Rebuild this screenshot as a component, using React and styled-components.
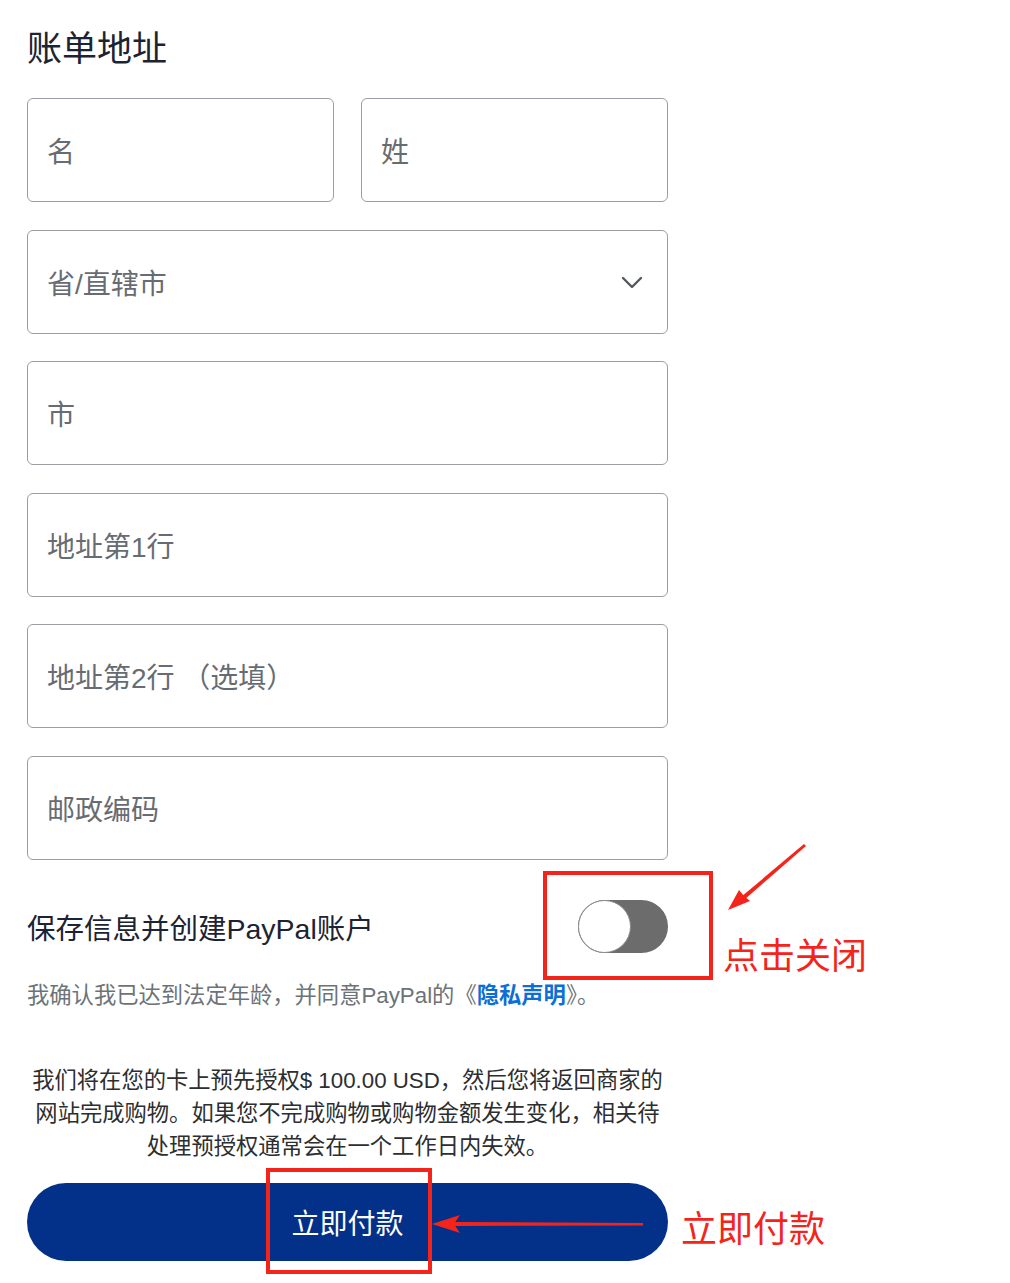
import React from "react";
import styled, { createGlobalStyle } from "styled-components";

const GlobalStyle = createGlobalStyle`
  html, body {
    margin: 0;
    padding: 0;
    background: #ffffff;
  }
  body {
    font-family: "Liberation Sans", "Noto Sans CJK SC", sans-serif;
    -webkit-font-smoothing: antialiased;
  }
`;

const fields = [
  { label: "省/直辖市", select: true },
  { label: "市" },
  { label: "地址第1行" },
  { label: "地址第2行 （选填）" },
  { label: "邮政编码" },
];

export default function App() {
  return (
    <>
      <GlobalStyle />
      <Page>
        <Form>
          <Title>账单地址</Title>

          <Fields>
            <NameRow>
              <Field>
                <Placeholder>名</Placeholder>
              </Field>
              <Field>
                <Placeholder>姓</Placeholder>
              </Field>
            </NameRow>

            {fields.map((f) => (
              <Field key={f.label}>
                <Placeholder>{f.label}</Placeholder>
                {f.select && (
                  <Chevron viewBox="0 0 22 14" width="22" height="14">
                    <polyline
                      points="2,2 11,11 20,2"
                      fill="none"
                      stroke="#55585c"
                      strokeWidth="2.4"
                      strokeLinecap="round"
                      strokeLinejoin="round"
                    />
                  </Chevron>
                )}
              </Field>
            ))}
          </Fields>

          <SaveRow>
            <SaveLabel>保存信息并创建PayPal账户</SaveLabel>
            <Toggle>
              <Knob />
            </Toggle>
          </SaveRow>

          <Consent>
            我确认我已达到法定年龄，并同意PayPal的《<ConsentLink>隐私声明</ConsentLink>》。
          </Consent>

          <Notice>
            <Line>我们将在您的卡上预先授权$ 100.00 USD，然后您将返回商家的</Line>
            <Line>网站完成购物。如果您不完成购物或购物金额发生变化，相关待</Line>
            <Line>处理预授权通常会在一个工作日内失效。</Line>
          </Notice>

          <PayButton type="button">立即付款</PayButton>
        </Form>

        {/* annotations */}
        <MarkBox $left={543} $top={871} $width={170} $height={109} />
        <ArrowSvg $left={720} $top={838} width="92" height="80" viewBox="0 0 92 80">
          <polygon points="84,6 86,8 24,62 21,59" fill="#f5241a" />
          <polygon points="8,72 30,63 24,58 19,52" fill="#f5241a" />
        </ArrowSvg>
        <NoteText $left={723} $top={933}>点击关闭</NoteText>

        <MarkBox $left={266} $top={1168} $width={166} $height={106} />
        <ArrowSvg $left={430} $top={1212} width="216" height="24" viewBox="0 0 216 24">
          <polygon points="24,10 213,11 213,13.5 24,14" fill="#f5241a" />
          <polygon points="2,12 30,3 24,12 30,21" fill="#f5241a" />
        </ArrowSvg>
        <NoteText $left={681} $top={1206}>立即付款</NoteText>
      </Page>
    </>
  );
}

// styled-components
const Page = styled.div`
  position: relative;
  width: 1010px;
  min-height: 1283px;
  padding: 28px 0 0 27px;
  box-sizing: border-box;
  overflow: hidden;
`;

const Form = styled.div`
  width: 641px;
  display: flex;
  flex-direction: column;
`;

const Title = styled.h1`
  margin: 0 0 28px;
  font-size: 35px;
  line-height: 42px;
  font-weight: 400;
  color: #1c2333;
`;

const Fields = styled.div`
  display: flex;
  flex-direction: column;
  gap: 27.5px;
`;

const NameRow = styled.div`
  display: grid;
  grid-template-columns: 1fr 1fr;
  gap: 27px;
`;

const Field = styled.div`
  height: 104px;
  box-sizing: border-box;
  border: 1px solid #9b9ea2;
  border-radius: 6px;
  padding: 0 24px 0 19px;
  display: flex;
  align-items: center;
  justify-content: space-between;
`;

const Placeholder = styled.span`
  font-size: 28px;
  color: #676c72;
  white-space: pre;
`;

const Chevron = styled.svg`
  display: block;
  flex-shrink: 0;
  margin-top: 3px;
`;

const SaveRow = styled.div`
  margin-top: 40px;
  height: 53px;
  display: flex;
  align-items: center;
  justify-content: space-between;
`;

const SaveLabel = styled.span`
  font-size: 28.5px;
  color: #1c2333;
`;

const Toggle = styled.div`
  position: relative;
  width: 90px;
  height: 53px;
  border-radius: 27px;
  background: #6c6c6c;
  display: flex;
  align-items: center;
`;

const Knob = styled.div`
  width: 53px;
  height: 53px;
  box-sizing: border-box;
  border-radius: 50%;
  background: #ffffff;
  border: 1px solid #8a8a8a;
`;

const Consent = styled.p`
  margin: 28px 0 0;
  font-size: 22.3px;
  line-height: 30px;
  color: #6c7378;
  white-space: nowrap;
`;

const ConsentLink = styled.a`
  color: #0b6fd6;
  font-weight: 700;
  text-decoration: none;
`;

const Notice = styled.div`
  margin-top: 53px;
  text-align: center;
  font-size: 22.3px;
  line-height: 33px;
  color: #2c2e2f;
`;

const Line = styled.span`
  display: block;
  white-space: nowrap;
`;

const PayButton = styled.button`
  margin-top: 20px;
  height: 78px;
  width: 100%;
  border: none;
  border-radius: 39px;
  background: #033189;
  color: #ffffff;
  font-family: inherit;
  font-size: 28px;
  cursor: pointer;
`;

const MarkBox = styled.div`
  position: absolute;
  left: ${(p) => p.$left}px;
  top: ${(p) => p.$top}px;
  width: ${(p) => p.$width}px;
  height: ${(p) => p.$height}px;
  box-sizing: border-box;
  border: 4px solid #f5241a;
  pointer-events: none;
`;

const ArrowSvg = styled.svg`
  position: absolute;
  left: ${(p) => p.$left}px;
  top: ${(p) => p.$top}px;
  pointer-events: none;
`;

const NoteText = styled.span`
  position: absolute;
  left: ${(p) => p.$left}px;
  top: ${(p) => p.$top}px;
  font-size: 36px;
  line-height: 48px;
  color: #f5241a;
  white-space: nowrap;
`;
